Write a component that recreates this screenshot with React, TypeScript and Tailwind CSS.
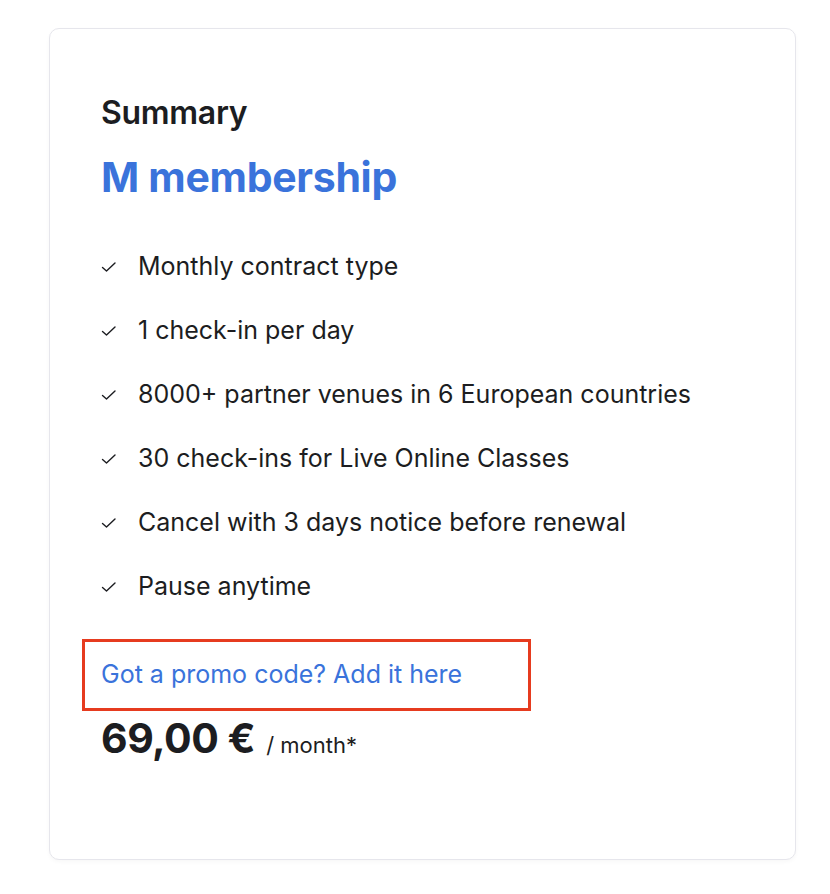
const features = [
  "Monthly contract type",
  "1 check-in per day",
  "8000+ partner venues in 6 European countries",
  "30 check-ins for Live Online Classes",
  "Cancel with 3 days notice before renewal",
  "Pause anytime",
];

const Check = () => (
  <svg width="16" height="12" viewBox="0 0 16 12" fill="none" className="shrink-0">
    <path d="M1.5 6.5 L5.5 10 L14 2" stroke="#1c1d21" strokeWidth="1.4" strokeLinecap="round" strokeLinejoin="round" />
  </svg>
);

const App = () => {
  return (
    <div className="min-h-[894px] w-[830px] bg-white pt-[28px] pl-[49px]" style={{ fontFamily: "Inter, 'Noto Sans', sans-serif" }}>
      <div className="w-[747px] h-[832px] rounded-[10px] border border-[#e6e6ec] shadow-[0_2px_4px_rgba(0,0,0,0.03)] bg-white pl-[51px] pt-[64px]">
        <h2 className="text-[32px] leading-[40px] font-semibold text-[#1c1d21] tracking-[-0.3px]">Summary</h2>
        <h1 className="mt-[20px] text-[41px] leading-[48px] font-bold text-[#3a73db] tracking-[-0.3px]">M membership</h1>
        <ul className="mt-[50px] flex flex-col gap-[32px]">
          {features.map((f) => (
            <li key={f} className="flex items-center gap-[21px] h-[32px] text-[25px] text-[#1c1d21]">
              <Check />
              <span>{f}</span>
            </li>
          ))}
        </ul>
        <div className="mt-[36px] -ml-[19px] w-[449px] h-[72px] border-[3px] border-[#e63b1f] flex items-center pl-[16px]">
          <a className="text-[25px] text-[#3a73db]">Got a promo code? Add it here</a>
        </div>
        <div className="mt-[3px] flex items-baseline gap-[11px] text-[#1c1d21]">
          <span className="text-[41px] leading-[48px] font-bold tracking-[-0.5px]">69,00 €</span>
          <span className="text-[22px]">/ month*</span>
        </div>
      </div>
    </div>
  );
};

export default App;
